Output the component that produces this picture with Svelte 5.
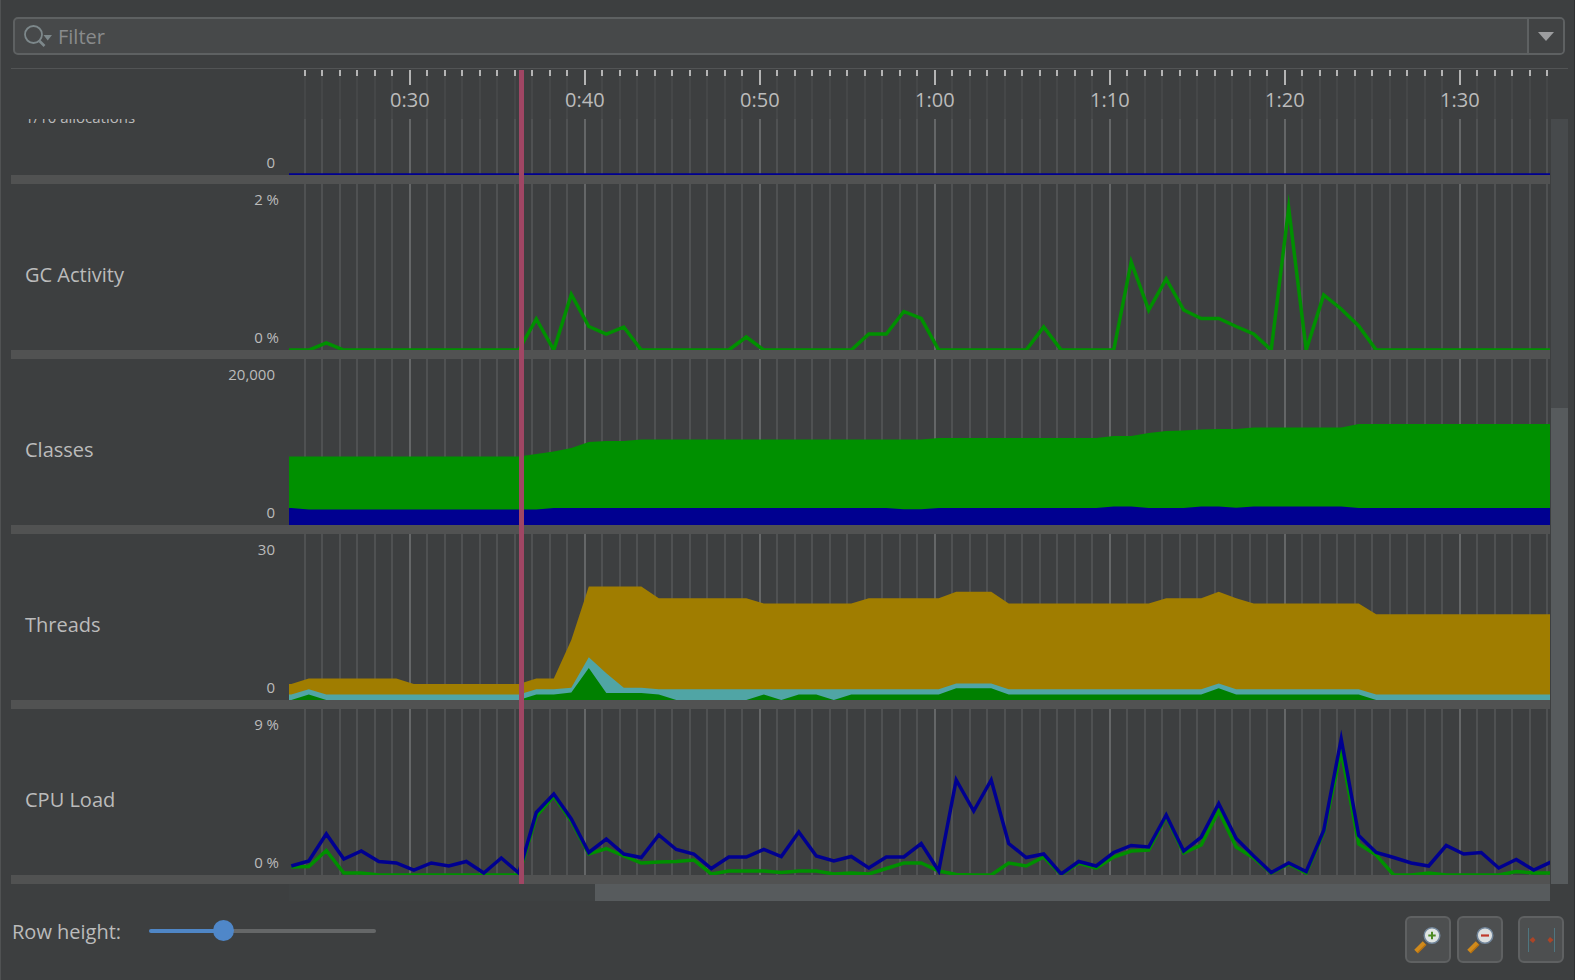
<script>
  let filter = '';
  let rowHeight = 175;
  let plotWidth = 1261;

  // visible part of the recording, in seconds
  const start = 23.09;
  const span = 72.06;
  const bookmark = 36.37;
  const divider = 9;

  const seconds = Array.from({ length: 72 }, (_, i) => i + 24);

  const fill = (value, count) => Array(count).fill(value);

  // one sample per second, first one at 0:23, as height out of `max`
  const rows = [
    {
      note: '1/10 allocations',
      low: '0',
      max: 166,
      series: [{ kind: 'line', color: '#000090', data: fill(0, 73) }]
    },
    {
      name: 'GC Activity',
      high: '2 %',
      low: '0 %',
      max: 166,
      series: [
        {
          kind: 'line',
          color: '#009000',
          data: [
            0, 0, 7, ...fill(0, 11), 31, 0, 55.5, 23.5, 16, 23, ...fill(0, 6), 13, ...fill(0, 6),
            16, 16, 38.5, 31.5, ...fill(0, 6), 23, 0, 0, 0, 0, 88, 40, 71, 40, 31.5, 31.5, 23.5, 16,
            0, 142, 0, 55, 41, 24, ...fill(0, 11)
          ]
        }
      ]
    },
    {
      name: 'Classes',
      high: '20,000',
      low: '0',
      max: 166,
      series: [
        {
          kind: 'area',
          color: '#009000',
          data: [
            ...fill(68.5, 14), 71, 73.5, 77, 83, 84, 84, ...fill(85.5, 17), ...fill(87, 10),
            89, 89, 92, 94, 94.5, 95.5, 96, 96, ...fill(97.5, 6), ...fill(101, 12)
          ]
        },
        {
          kind: 'area',
          color: '#000090',
          data: [
            17, ...fill(15.5, 14), ...fill(17, 20), 15.7, 15.7, ...fill(17, 10), 18.5, 18.5,
            17, 17, 17, 18.5, 18.5, 17.2, ...fill(18.5, 6), ...fill(17, 12)
          ]
        }
      ]
    },
    {
      name: 'Threads',
      high: '30',
      low: '0',
      max: 31,
      series: [
        {
          kind: 'area',
          color: '#a07d00',
          data: [
            3, ...fill(4, 6), ...fill(3, 7), 4, 4, 11.2, ...fill(21.2, 4), ...fill(19, 6),
            ...fill(18, 6), ...fill(19, 5), 20.2, 20.2, 20.2, ...fill(18, 9), 19, 19, 19, 20.2, 19,
            ...fill(18, 7), ...fill(16, 11)
          ]
        },
        {
          kind: 'area',
          color: '#50a5a5',
          data: [
            1, 2, ...fill(1, 12), 2, 2, 2.3, 8, 5, 2.3, 2.3, ...fill(2, 17), 3.1, 3.1, 3.1,
            ...fill(2, 12), 3.1, ...fill(2, 8), ...fill(1, 11)
          ]
        },
        {
          kind: 'area',
          color: '#008000',
          data: [
            0, 1, ...fill(0, 12), 1, 1, 1.4, 6, 1.3, 1.3, 1.3, 1, ...fill(0, 5), 1, 0, 1, 1, 0,
            ...fill(1, 6), 2.2, 2.2, 2.2, ...fill(1, 12), 2.2, ...fill(1, 8), ...fill(0, 11)
          ]
        }
      ]
    },
    {
      name: 'CPU Load',
      high: '9 %',
      low: '0 %',
      max: 166,
      series: [
        {
          kind: 'line',
          color: '#009000',
          data: [
            8, 8.5, 24.5, 2, 2, ...fill(0, 9), 59, 79, 54, 21, 26.5, 19, 12, 13, 13.5, 15, 1,
            4, 4, 4, 2.5, 4, 4, 1, 2, 1, 6.5, 12, 12, 4, 0.5, 0, 0, 12, 9, 18, 0.5, 12, 7, 18, 24,
            25, 59, 22, 30, 64, 28, 17, 2, 11, 2, 43, 124, 31, 20, 0, 0, 2, 0, 0, 0, 0,
            3.5, 2, 2
          ]
        },
        {
          kind: 'line',
          color: '#000090',
          data: [
            9, 14, 41, 16, 24, 13.5, 12, 5, 12, 9, 13.5, 2, 17, 2, 62.5, 81, 56, 22.5, 36, 21,
            17.5, 40, 25.5, 21, 6.5, 18, 18, 25.5, 18.5, 43, 19, 14, 18.5, 7, 18, 18, 31.5, 4, 95,
            64, 95, 31.5, 17.5, 21, 1, 13.5, 9, 22.5, 29.5, 28, 60, 24, 38, 71.5, 36.5, 19, 2.5, 12,
            3.5, 44.5, 136, 39.5, 22.5, 17.5, 12, 9, 29.5, 21, 22.5, 7, 15.5, 5, 13
          ]
        }
      ]
    }
  ];

  $: scale = plotWidth / span;
  $: x = (t) => Math.round((t - start) * scale * 10) / 10;
  $: plotHeight = rowHeight - divider;
  $: sliderFill = ((rowHeight - 80) / 306) * 100;

  $: points = (series, max) => {
    const y = (v) => Math.round(plotHeight * (1 - v / max) * 10) / 10;
    const list = series.data.map((v, i) => `${x(23.22 + i)},${y(v)}`);
    const first = `-1,${y(series.data[0])}`;
    if (series.kind === 'line') {
      return [series.data[0] ? '' : first, ...list].join(' ');
    }
    return [`-1,${plotHeight}`, first, ...list, `${plotWidth + 2},${plotHeight}`].join(' ');
  };

  function label(t) {
    return `${Math.floor(t / 60)}:${String(t % 60).padStart(2, '0')}`;
  }
</script>

<main>
  <div class="filter">
    <svg class="search" viewBox="0 0 30 26" aria-hidden="true">
      <circle cx="9.5" cy="11.5" r="8.5" fill="none" stroke="#7d888b" stroke-width="1.8" />
      <path d="M15.500 18 L20.500 23" stroke="#7d888b" stroke-width="2.6" />
      <path d="M19.500 12 H28 L23.700 17.500 Z" fill="#7d888b" />
    </svg>
    <input type="text" placeholder="Filter" aria-label="Filter" bind:value={filter} />
    <button class="drop" aria-label="Filter history">
      <svg viewBox="0 0 16 9" aria-hidden="true"><path d="M0 0 H16 L8 9 Z" fill="#9c9d9f" /></svg>
    </button>
  </div>

  <section class="timeline">
    <div class="header">
      <div class="ruler" bind:clientWidth={plotWidth}>
        <svg width={plotWidth} height="50">
          {#each seconds as t}
            {#if t % 10 === 0}
              <rect class="tick" x={x(t) - 1} y="1" width="2" height="15" />
            {:else}
              <rect class="faint" x={x(t) - 1} y="7" width="2" height="43" />
              <rect class="tick" x={x(t) - 1} y="1" width="2" height="6" />
            {/if}
          {/each}
          {#each seconds.filter((t) => t % 10 === 0) as t}
            <text x={x(t)} y="38" text-anchor="middle">{label(t)}</text>
          {/each}
        </svg>
      </div>
    </div>

    <div class="body">
      <div class="rows">
        {#each rows as row}
          <div class="row" style="height: {rowHeight}px">
            <div class="name">
              {#if row.name}<span>{row.name}</span>{/if}
              {#if row.note}<small>{row.note}</small>{/if}
            </div>
            <div class="limits" class:percent={row.low.endsWith('%')}>
              <span>{row.high ?? ''}</span>
              <span>{row.low}</span>
            </div>
            <svg class="plot" height={plotHeight}>
              {#each seconds as t}
                <rect
                  class={t % 10 === 0 ? 'major' : 'minor'}
                  x={x(t) - 1}
                  y="0"
                  width="2"
                  height={plotHeight}
                />
              {/each}
              {#each row.series as series}
                {#if series.kind === 'line'}
                  <polyline class="line" points={points(series, row.max)} stroke={series.color} />
                {:else}
                  <polygon points={points(series, row.max)} fill={series.color} />
                {/if}
              {/each}
            </svg>
          </div>
        {/each}
      </div>
      <div class="vscroll"><div class="thumb"></div></div>
    </div>

    <div class="marker" style="left: {278 + x(bookmark) - 2}px"></div>
  </section>

  <div class="hscroll"><div class="thumb"></div></div>

  <footer>
    <label for="row-height">Row height:</label>
    <input
      id="row-height"
      type="range"
      min="80"
      max="386"
      bind:value={rowHeight}
      style="--fill: {sliderFill}%"
    />
    <div class="tools">
      <button aria-label="Zoom in">
        <svg viewBox="2 2 42 43" aria-hidden="true">
          <path d="M11 35.500 L19.500 27" stroke="#d08a1c" stroke-width="5" />
          <path d="M12.500 37 L21 28.500" stroke="#b26f10" stroke-width="1.500" />
          <circle cx="27" cy="19.500" r="7.800" fill="#dfe4e2" stroke="#71859a" stroke-width="1.500" />
          <path d="M23.300 19.500 H30.700 M27 15.800 V23.200" stroke="#4c8a22" stroke-width="2" />
        </svg>
      </button>
      <button aria-label="Zoom out">
        <svg viewBox="2 2 42 43" aria-hidden="true">
          <path d="M12 35.500 L20.500 27" stroke="#d08a1c" stroke-width="5" />
          <path d="M13.500 37 L22 28.500" stroke="#b26f10" stroke-width="1.500" />
          <circle cx="28" cy="19.500" r="7.800" fill="#dcdfdf" stroke="#71859a" stroke-width="1.500" />
          <path d="M24 19.500 H32" stroke="#c0392b" stroke-width="2.200" />
        </svg>
      </button>
      <button class="fit" aria-label="Fit window">
        <svg viewBox="2 2 42 43" aria-hidden="true">
          <path d="M10.500 12 V36 M36.500 12 V36" stroke="#4f7680" stroke-width="1" />
          <path d="M11.500 24 L15 21 L17.500 24 L15 27 Z M29.500 24 L32 21 L35.500 24 L32 27 Z" fill="#ab4528" />
        </svg>
      </button>
    </div>
  </footer>
</main>

<style>
  :global(body) {
    background: #3d3f40;
  }
  main {
    box-sizing: border-box;
    height: 100vh;
    display: flex;
    flex-direction: column;
    padding: 17px 6px 0 10px;
    border-left: 1px solid #505253;
    border-right: 1px solid #2f3031;
    background: #3d3f40;
    color: #bbbbbb;
    font-family: 'Open Sans', 'Noto Sans', sans-serif;
    font-size: 20px;
  }
  button {
    padding: 0;
    margin: 0;
    cursor: pointer;
  }
  .filter {
    box-sizing: border-box;
    flex: none;
    display: flex;
    align-items: center;
    height: 38px;
    margin: 0 3px 13px 2px;
    padding-left: 9px;
    border: 2px solid #5e6162;
    border-radius: 5px;
    background: #47494a;
    overflow: hidden;
  }
  .search {
    width: 30px;
    height: 26px;
  }
  .filter input {
    flex: 1;
    min-width: 0;
    height: 34px;
    padding: 0 4px;
    border: none;
    outline: none;
    background: transparent;
    color: #bbbbbb;
    font: inherit;
  }
  .filter input::placeholder {
    color: #898b8c;
    opacity: 1;
  }
  .drop {
    display: flex;
    align-items: center;
    justify-content: center;
    width: 36px;
    height: 34px;
    border: none;
    border-left: 2px solid #5e6162;
    background: #414344;
  }
  .drop svg {
    width: 16px;
    height: 9px;
  }
  .timeline {
    position: relative;
    flex: 1;
    min-height: 0;
    display: flex;
    flex-direction: column;
    border-top: 1px solid #525455;
  }
  .header {
    flex: none;
    height: 50px;
    padding: 0 18px 0 278px;
  }
  .ruler {
    height: 50px;
    overflow: hidden;
  }
  svg {
    display: block;
  }
  text {
    fill: #bbbbbb;
  }
  rect {
    shape-rendering: crispEdges;
  }
  .tick {
    fill: #b4b4b4;
  }
  .faint {
    fill: #454748;
  }
  .minor {
    fill: #4f5152;
  }
  .major {
    fill: #646667;
  }
  .body {
    flex: 1;
    min-height: 0;
    display: flex;
    gap: 1px;
  }
  .rows {
    flex: 1;
    min-width: 0;
    display: flex;
    flex-direction: column;
    justify-content: flex-end;
    overflow: hidden;
  }
  .row {
    box-sizing: border-box;
    flex: none;
    display: flex;
    border-bottom: 9px solid #515252;
  }
  .name {
    box-sizing: border-box;
    width: 178px;
    display: flex;
    flex-direction: column;
    justify-content: center;
    padding: 16px 0 0 14px;
    line-height: 28px;
  }
  .name small {
    padding-top: 34px;
    font-size: 15px;
    line-height: 20px;
  }
  .limits {
    box-sizing: border-box;
    width: 100px;
    display: flex;
    flex-direction: column;
    justify-content: space-between;
    padding: 5px 14px 3px 0;
    font-size: 15px;
    line-height: 20px;
    text-align: right;
  }
  .limits.percent {
    padding-right: 10px;
  }
  .plot {
    flex: 1;
    min-width: 0;
    overflow: hidden;
  }
  .line {
    fill: none;
    stroke-width: 3.5;
    stroke-miterlimit: 10;
  }
  .vscroll {
    display: flex;
    flex-direction: column;
    width: 17px;
    background: #474a4c;
  }
  .vscroll .thumb {
    height: 62.2%;
    margin-top: auto;
  }
  .thumb {
    background: #575b5d;
  }
  .marker {
    position: absolute;
    top: 1px;
    bottom: 0;
    width: 5px;
    background: #a04664;
  }
  .hscroll {
    flex: none;
    display: flex;
    justify-content: flex-end;
    height: 17px;
    margin: 0 18px 0 278px;
    background: #3e4142;
  }
  .hscroll .thumb {
    width: 75.7%;
  }
  footer {
    flex: none;
    display: flex;
    align-items: flex-start;
    padding: 15px 4px 17px 1px;
  }
  footer label {
    width: 137px;
    line-height: 32px;
  }
  footer input {
    appearance: none;
    width: 227px;
    height: 30px;
    margin: 0;
    background: transparent;
  }
  footer input::-webkit-slider-runnable-track {
    height: 4px;
    border-radius: 2px;
    background: linear-gradient(to right, #4f86c6 var(--fill), #656768 var(--fill));
  }
  footer input::-webkit-slider-thumb {
    appearance: none;
    width: 21px;
    height: 21px;
    margin-top: -9px;
    border-radius: 50%;
    background: #4f87c9;
  }
  .tools {
    display: flex;
    gap: 6px;
    margin-left: auto;
  }
  .tools button {
    box-sizing: border-box;
    width: 46px;
    height: 47px;
    border: 2px solid #5f6162;
    border-radius: 6px;
    background: #4d4f50;
  }
  .tools .fit {
    margin-left: 9px;
  }
</style>
